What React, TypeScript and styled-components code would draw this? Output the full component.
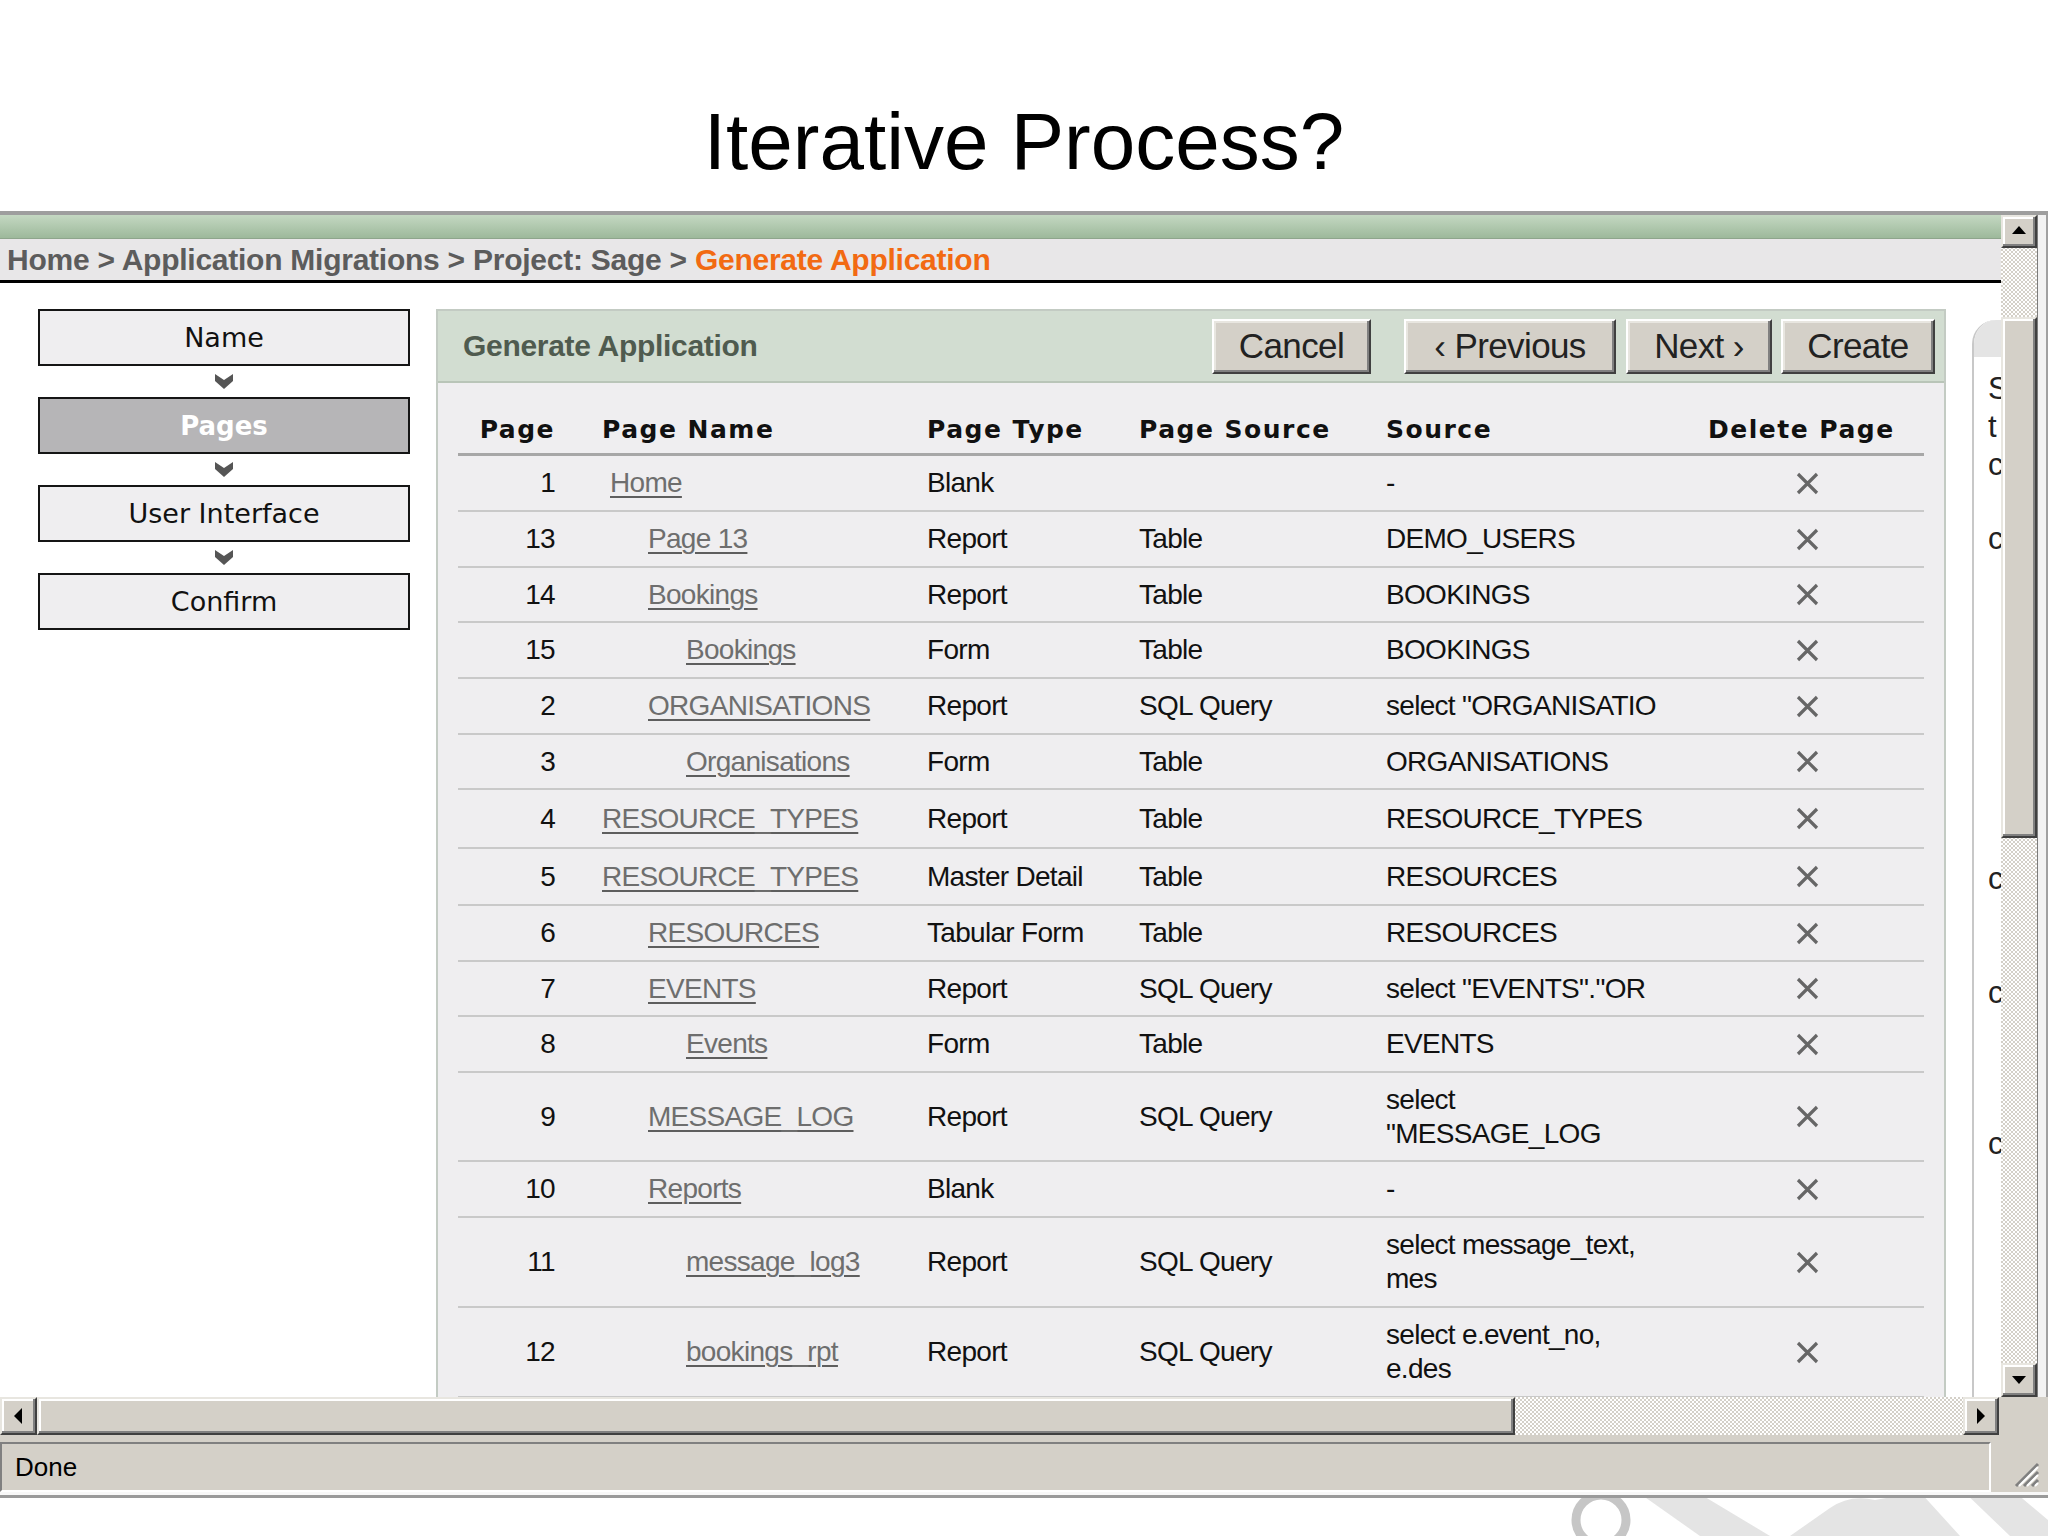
import React from "react";
import styled, { createGlobalStyle } from "styled-components";

const narrow = `"Liberation Sans", Arial, sans-serif`;
const verdana = `"DejaVu Sans", Verdana, sans-serif`;

const GlobalStyle = createGlobalStyle`
  html, body {
    margin: 0;
    padding: 0;
    background: #ffffff;
  }
  body {
    width: 2048px;
    height: 1536px;
    overflow: hidden;
    font-family: "Liberation Sans", Arial, sans-serif;
  }
`;

const Page = styled.div`
  position: relative;
  width: 2048px;
  height: 1536px;
  overflow: hidden;
  background: #ffffff;
`;

const Title = styled.h1`
  margin: 0;
  height: 211px;
  box-sizing: border-box;
  padding-top: 72px;
  display: flex;
  align-items: center;
  justify-content: center;
  font: 400 80px/1 "Liberation Sans", Arial, sans-serif;
  color: #000;
`;

const Watermark = styled.svg`
  position: absolute;
  left: 1540px;
  top: 1470px;
  z-index: 0;
`;

const Window = styled.div`
  position: relative;
  z-index: 1;
  display: flex;
  flex-direction: column;
  background: #d4d0c8;
  border-top: 4px solid #9e9e9e;
  border-bottom: 3px solid #9a9a9a;
`;

const MainArea = styled.div`
  display: flex;
  height: 1182px;
`;

const Viewport = styled.div`
  width: 2001px;
  flex-shrink: 0;
  overflow: hidden;
  background: #ffffff;
`;

const GreenBar = styled.div`
  height: 23px;
  background: linear-gradient(#c4d8c2, #9db99b);
  border-bottom: 1px solid #8ea58c;
`;

const Crumbs = styled.div`
  height: 41px;
  display: flex;
  align-items: center;
  padding-left: 7px;
  background: #e8e7e8;
  border-bottom: 3px solid #000;
  font: 700 30px ${narrow};
  letter-spacing: -0.25px;
  color: #5c5c5c;
  white-space: pre;
`;

const CrumbCurrent = styled.span`
  color: #f26a12;
`;

const ContentRow = styled.div`
  display: flex;
  align-items: flex-start;
  gap: 26px;
  padding: 26px 0 0 38px;
`;

const Nav = styled.div`
  width: 372px;
  flex-shrink: 0;
  display: flex;
  flex-direction: column;
  align-items: center;
`;

const NavStep = styled.div<{ $active?: boolean }>`
  width: 372px;
  height: 57px;
  box-sizing: border-box;
  border: 2px solid #151515;
  background: ${(p) => (p.$active ? "#b6b5b7" : "#efeef0")};
  display: flex;
  align-items: center;
  justify-content: center;
  font-family: ${verdana};
  font-size: ${(p) => (p.$active ? "26px" : "27px")};
  font-weight: ${(p) => (p.$active ? 700 : 400)};
  color: ${(p) => (p.$active ? "#ffffff" : "#111111")};
`;

const NavArrow = styled.div`
  height: 31px;
  display: flex;
  align-items: center;
  justify-content: center;
`;

const Panel = styled.div`
  width: 1510px;
  flex-shrink: 0;
  box-sizing: border-box;
  border: 2px solid #c3cbc3;
  background: #efeef0;
`;

const PanelHeader = styled.div`
  height: 70px;
  display: flex;
  align-items: center;
  padding: 0 9px 0 25px;
  background: #d2ddd1;
  border-bottom: 2px solid #b9c5b8;
`;

const PanelTitle = styled.div`
  flex: 1;
  font: 700 30px ${narrow};
  letter-spacing: -0.3px;
  color: #4f5b4f;
`;

const Button = styled.button<{ $w: number; $gap?: number }>`
  width: ${(p) => p.$w}px;
  height: 55px;
  margin-right: ${(p) => p.$gap ?? 0}px;
  padding: 0;
  box-sizing: border-box;
  background: #d4d0c8;
  border: 2px solid;
  border-color: #ffffff #404040 #404040 #ffffff;
  box-shadow: inset -2px -2px #808080, inset 2px 2px #e8e6e0;
  font: 400 35px ${narrow};
  letter-spacing: -0.6px;
  color: #222;
  display: flex;
  align-items: center;
  justify-content: center;
`;

const PanelBody = styled.div`
  padding: 22px 20px 60px;
`;

const cols = "132px 325px 212px 247px 322px 228px";

const HeadRow = styled.div`
  display: grid;
  grid-template-columns: ${cols};
  align-items: center;
  height: 51px;
  box-sizing: border-box;
  border-bottom: 3px solid #a7a7a7;
  font: 700 25px ${verdana};
  letter-spacing: 1.5px;
  color: #111;
`;

const HeadCell = styled.div<{ $right?: boolean }>`
  padding: ${(p) => (p.$right ? "0 35px 0 0" : "0 0 0 12px")};
  text-align: ${(p) => (p.$right ? "right" : "left")};
  white-space: nowrap;
`;

const Row = styled.div<{ $h: number }>`
  display: grid;
  grid-template-columns: ${cols};
  align-items: center;
  height: ${(p) => p.$h}px;
  box-sizing: border-box;
  border-bottom: 2px solid #c9c9c9;
  font: 400 28px/34px ${narrow};
  letter-spacing: -0.7px;
  color: #111;
`;

const NumCell = styled.div`
  padding-right: 35px;
  text-align: right;
`;

const Cell = styled.div`
  padding-left: 12px;
  white-space: nowrap;
`;

const NameLink = styled.a<{ $indent: number }>`
  margin-left: ${(p) => p.$indent}px;
  color: #6e6e6e;
  text-decoration: underline;
  text-decoration-color: #5e5e5e;
  text-decoration-thickness: 2px;
  text-underline-offset: 4px;
`;

const DeleteCell = styled.div`
  display: flex;
  justify-content: center;
  padding-right: 6px;
`;

const SidePanel = styled.div`
  width: 320px;
  height: 1110px;
  flex-shrink: 0;
  margin-top: 11px;
  border-left: 2px solid #c8c8c8;
  border-top-left-radius: 24px;
  background: #ffffff;
  overflow: hidden;
`;

const SideHeader = styled.div`
  height: 37px;
  background: #e4e4e4;
`;

const SideBody = styled.div`
  padding: 13px 12px 13px 14px;
  font: 400 31px/38px "Liberation Sans", Arial, sans-serif;
  color: #222;
`;

const SidePara = styled.p<{ $top: number }>`
  margin: ${(p) => p.$top}px 0 0;
`;

const VScroll = styled.div`
  width: 36px;
  flex-shrink: 0;
  display: flex;
  flex-direction: column;
  background-color: #ffffff;
  background-image: repeating-conic-gradient(#d4d0c8 0 25%, #ffffff 0 50%);
  background-size: 4px 4px;
`;

const ScrollButton = styled.div<{ $size: number; $vertical?: boolean }>`
  ${(p) => (p.$vertical ? `height: ${p.$size}px;` : `width: ${p.$size}px;`)}
  flex-shrink: 0;
  box-sizing: border-box;
  background: #d4d0c8;
  border: 2px solid;
  border-color: #e8e6e0 #404040 #404040 #e8e6e0;
  box-shadow: inset -2px -2px #808080, inset 2px 2px #ffffff;
  display: flex;
  align-items: center;
  justify-content: center;
`;

const Thumb = styled.div<{ $len: number; $vertical?: boolean }>`
  ${(p) => (p.$vertical ? `height: ${p.$len}px;` : `width: ${p.$len}px;`)}
  flex-shrink: 0;
  box-sizing: border-box;
  background: #d4d0c8;
  border: 2px solid;
  border-color: #e8e6e0 #404040 #404040 #e8e6e0;
  box-shadow: inset -2px -2px #808080, inset 2px 2px #ffffff;
`;

const Track = styled.div<{ $len?: number }>`
  ${(p) => (p.$len ? `flex: 0 0 ${p.$len}px;` : "flex: 1;")}
`;

const RightFrame = styled.div`
  width: 11px;
  flex-shrink: 0;
  box-sizing: border-box;
  background: #f2f2f2;
  border-left: 1px solid #7c7c7c;
  border-right: 2px solid #a0a0a0;
`;

const HScrollRow = styled.div`
  display: flex;
  height: 38px;
`;

const HScroll = styled.div`
  width: 1999px;
  display: flex;
  background-color: #ffffff;
  background-image: repeating-conic-gradient(#d4d0c8 0 25%, #ffffff 0 50%);
  background-size: 4px 4px;
`;

const StatusBar = styled.div`
  display: flex;
  height: 53px;
  margin-top: 7px;
  box-sizing: border-box;
  border-bottom: 3px solid #f8f8f8;
`;

const StatusField = styled.div`
  width: 1991px;
  box-sizing: border-box;
  border: 2px solid;
  border-color: #808080 #ffffff #ffffff #808080;
  display: flex;
  align-items: center;
  padding-left: 13px;
  font: 400 26px "Liberation Sans", Arial, sans-serif;
  color: #000;
`;

const Grip = styled.div`
  flex: 1;
  display: flex;
  align-items: flex-end;
  justify-content: flex-end;
  padding: 0 8px 4px 0;
`;

type PageRow = {
  id: number;
  name: string;
  indent: number;
  type: string;
  source: string;
  src: string[];
  h: number;
};

const rows: PageRow[] = [
  { id: 1, name: "Home", indent: 8, type: "Blank", source: "", src: ["-"], h: 56 },
  { id: 13, name: "Page 13", indent: 46, type: "Report", source: "Table", src: ["DEMO_USERS"], h: 56 },
  { id: 14, name: "Bookings", indent: 46, type: "Report", source: "Table", src: ["BOOKINGS"], h: 55 },
  { id: 15, name: "Bookings", indent: 84, type: "Form", source: "Table", src: ["BOOKINGS"], h: 56 },
  { id: 2, name: "ORGANISATIONS", indent: 46, type: "Report", source: "SQL Query", src: ['select "ORGANISATIO'], h: 56 },
  { id: 3, name: "Organisations", indent: 84, type: "Form", source: "Table", src: ["ORGANISATIONS"], h: 55 },
  { id: 4, name: "RESOURCE_TYPES", indent: 0, type: "Report", source: "Table", src: ["RESOURCE_TYPES"], h: 59 },
  { id: 5, name: "RESOURCE_TYPES", indent: 0, type: "Master Detail", source: "Table", src: ["RESOURCES"], h: 57 },
  { id: 6, name: "RESOURCES", indent: 46, type: "Tabular Form", source: "Table", src: ["RESOURCES"], h: 56 },
  { id: 7, name: "EVENTS", indent: 46, type: "Report", source: "SQL Query", src: ['select "EVENTS"."OR'], h: 55 },
  { id: 8, name: "Events", indent: 84, type: "Form", source: "Table", src: ["EVENTS"], h: 56 },
  { id: 9, name: "MESSAGE_LOG", indent: 46, type: "Report", source: "SQL Query", src: ["select", '"MESSAGE_LOG'], h: 89 },
  { id: 10, name: "Reports", indent: 46, type: "Blank", source: "", src: ["-"], h: 56 },
  { id: 11, name: "message_log3", indent: 84, type: "Report", source: "SQL Query", src: ["select message_text,", "mes"], h: 90 },
  { id: 12, name: "bookings_rpt", indent: 84, type: "Report", source: "SQL Query", src: ["select e.event_no,", "e.des"], h: 90 },
];

const steps = ["Name", "Pages", "User Interface", "Confirm"];

const DownChevron = () => (
  <svg width="18" height="15" viewBox="0 0 18 15">
    <path d="M0 0 L9 6 L18 0 L18 7 L9 15 L0 7 Z" fill="#555" />
  </svg>
);

const DeleteIcon = () => (
  <svg width="25" height="25" viewBox="0 0 25 25">
    <path d="M3 3 L22 22 M22 3 L3 22" stroke="#666" strokeWidth="3.2" />
  </svg>
);

const Arrow = ({ dir }: { dir: "up" | "down" | "left" | "right" }) => {
  const d = {
    up: "M2 11 L9 3 L16 11 Z",
    down: "M2 5 L9 13 L16 5 Z",
    left: "M12 1 L4 9 L12 17 Z",
    right: "M5 1 L13 9 L5 17 Z",
  }[dir];
  return (
    <svg width="18" height="18" viewBox="0 0 18 18">
      <path d={d} fill="#000" />
    </svg>
  );
};

const ResizeGrip = () => (
  <svg width="30" height="30" viewBox="0 0 30 30">
    <path d="M28 6 L6 28 M28 14 L14 28 M28 22 L22 28" stroke="#808080" strokeWidth="3" />
    <path d="M28 9 L9 28 M28 17 L17 28 M28 25 L25 28" stroke="#ffffff" strokeWidth="2" />
  </svg>
);

const App: React.FC = () => {
  return (
    <Page>
      <GlobalStyle />
      <Title>Iterative Process?</Title>

      <Watermark width="508" height="66" viewBox="0 0 508 66">
        <circle cx="61" cy="50" r="25" fill="none" stroke="#c6c6c6" strokeWidth="9" />
        <polygon points="92,18 150,18 230,66 160,66" fill="#e4e4e4" />
        <path d="M250 66 L290 38 Q310 24 335 30 L380 22 L420 66 Z" fill="#e4e4e4" />
        <polygon points="420,18 470,18 508,50 508,66 470,66" fill="#e4e4e4" />
      </Watermark>

      <Window>
        <MainArea>
          <Viewport>
            <GreenBar />
            <Crumbs>
              {"Home > Application Migrations > Project: Sage > "}
              <CrumbCurrent>Generate Application</CrumbCurrent>
            </Crumbs>

            <ContentRow>
              <Nav>
                {steps.map((s, i) => (
                  <React.Fragment key={s}>
                    {i > 0 && (
                      <NavArrow>
                        <DownChevron />
                      </NavArrow>
                    )}
                    <NavStep $active={s === "Pages"}>{s}</NavStep>
                  </React.Fragment>
                ))}
              </Nav>

              <Panel>
                <PanelHeader>
                  <PanelTitle>Generate Application</PanelTitle>
                  <Button $w={159} $gap={33}>Cancel</Button>
                  <Button $w={212} $gap={10}>{"\u2039 Previous"}</Button>
                  <Button $w={146} $gap={9}>{"Next \u203a"}</Button>
                  <Button $w={154}>Create</Button>
                </PanelHeader>
                <PanelBody>
                  <HeadRow>
                    <HeadCell $right>Page</HeadCell>
                    <HeadCell>Page Name</HeadCell>
                    <HeadCell>Page Type</HeadCell>
                    <HeadCell>Page Source</HeadCell>
                    <HeadCell>Source</HeadCell>
                    <HeadCell>Delete Page</HeadCell>
                  </HeadRow>
                  {rows.map((r) => (
                    <Row key={r.id} $h={r.h}>
                      <NumCell>{r.id}</NumCell>
                      <Cell>
                        <NameLink $indent={r.indent}>{r.name}</NameLink>
                      </Cell>
                      <Cell>{r.type}</Cell>
                      <Cell>{r.source}</Cell>
                      <Cell>
                        {r.src.map((line, i) => (
                          <React.Fragment key={i}>
                            {i > 0 && <br />}
                            {line}
                          </React.Fragment>
                        ))}
                      </Cell>
                      <DeleteCell>
                        <DeleteIcon />
                      </DeleteCell>
                    </Row>
                  ))}
                </PanelBody>
              </Panel>

              <SidePanel>
                <SideHeader />
                <SideBody>
                  <SidePara $top={0}>
                    Select
                    <br />
                    t
                    <br />
                    columns
                  </SidePara>
                  <SidePara $top={36}>columns</SidePara>
                  <SidePara $top={302}>create</SidePara>
                  <SidePara $top={76}>create</SidePara>
                  <SidePara $top={113}>create</SidePara>
                </SideBody>
              </SidePanel>
            </ContentRow>
          </Viewport>

          <VScroll>
            <ScrollButton $vertical $size={33}>
              <Arrow dir="up" />
            </ScrollButton>
            <Track $len={69} />
            <Thumb $vertical $len={521} />
            <Track />
            <ScrollButton $vertical $size={34}>
              <Arrow dir="down" />
            </ScrollButton>
          </VScroll>
          <RightFrame />
        </MainArea>

        <HScrollRow>
          <HScroll>
            <ScrollButton $size={37}>
              <Arrow dir="left" />
            </ScrollButton>
            <Thumb $len={1478} />
            <Track />
            <ScrollButton $size={36}>
              <Arrow dir="right" />
            </ScrollButton>
          </HScroll>
        </HScrollRow>

        <StatusBar>
          <StatusField>Done</StatusField>
          <Grip>
            <ResizeGrip />
          </Grip>
        </StatusBar>
      </Window>
    </Page>
  );
};

export default App;
